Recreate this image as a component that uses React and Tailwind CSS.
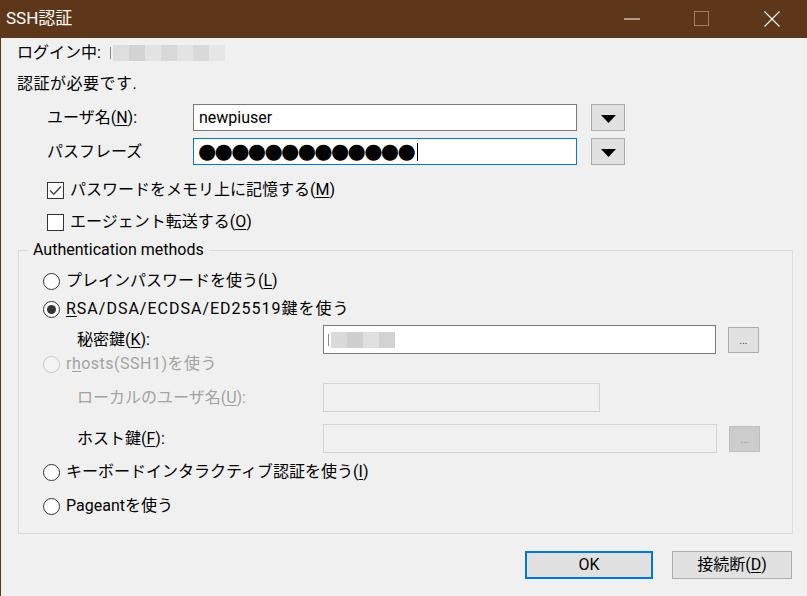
import React from "react";

// underlined access key letter
function Key({ children }) {
  return <span className="underline decoration-1 underline-offset-[2px]">{children}</span>;
}

function Blur({ blocks }) {
  return (
    <div className="flex h-[16px] items-center">
      <span className="mr-[2px] h-[12px] w-[1px] bg-[#8a8a8a]" />
      {blocks.map((c, i) => (
        <span key={i} className="h-[16px] w-[16px]" style={{ background: c }} />
      ))}
    </div>
  );
}

function DropBtn() {
  return (
    <div className="ml-[14px] flex h-[27px] w-[34px] items-center justify-center border border-[#adadad] bg-[#e1e1e1] pt-[3px]">
      <svg width="15" height="8" viewBox="0 0 15 8">
        <path d="M0 0 H15 L7.5 8 Z" fill="#000" />
      </svg>
    </div>
  );
}

function DotsBtn({ disabled }) {
  return (
    <div
      className={`ml-[12px] flex h-[26px] w-[31px] items-end justify-center border pb-[6px] text-[10px] leading-none ${
        disabled ? "border-[#bfbfbf] bg-[#cccccc] text-[#9a9a9a]" : "border-[#adadad] bg-[#e1e1e1] text-[#333]"
      }`}
    >
      ...
    </div>
  );
}

function Check({ checked, children, className = "" }) {
  return (
    <div className={`flex h-[22px] items-center ${className}`}>
      <span className="flex h-[17px] w-[17px] items-center justify-center border border-[#333] bg-white">
        {checked && (
          <svg width="13" height="11" viewBox="0 0 13 11">
            <path d="M1 5.5 L4.8 9.2 L12 1.6" fill="none" stroke="#444" strokeWidth="1.5" />
          </svg>
        )}
      </span>
      <span className="ml-[6px]">{children}</span>
    </div>
  );
}

function Radio({ checked, disabled, children, className = "" }) {
  return (
    <div className={`flex h-[20px] items-center ${className}`}>
      <span
        className={`flex h-[17px] w-[17px] items-center justify-center rounded-full border ${
          disabled ? "border-[#c6c6c6] bg-[#f4f4f4]" : "border-[#333] bg-white"
        }`}
      >
        {checked && <span className="h-[9px] w-[9px] rounded-full bg-[#333]" />}
      </span>
      <span className={`ml-[6px] ${disabled ? "text-[#a3a3a3]" : ""}`}>{children}</span>
    </div>
  );
}

export default function App() {
  return (
    <div className="flex h-[596px] w-[807px] flex-col overflow-hidden font-['Roboto','Noto_Sans_CJK_JP',sans-serif] text-[16px] text-black">
      {/* title bar */}
      <div className="flex h-[38px] shrink-0 items-center bg-[#5e361a] text-white">
        <span className="pl-[6px] text-[17px]">SSH認証</span>
        <div className="ml-auto flex h-full">
          <span className="flex w-[70px] items-center justify-center">
            <svg width="16" height="2" viewBox="0 0 16 2">
              <path d="M0 1 H16" stroke="#fff" strokeWidth="1" />
            </svg>
          </span>
          <span className="flex w-[70px] items-center justify-center">
            <svg width="16" height="16" viewBox="0 0 16 16">
              <rect x="0.5" y="0.5" width="14" height="14" fill="none" stroke="#9a7f6a" strokeWidth="1" />
            </svg>
          </span>
          <span className="flex w-[70px] items-center justify-center">
            <svg width="16" height="16" viewBox="0 0 16 16">
              <path d="M0.5 0.5 L15.5 15.5 M15.5 0.5 L0.5 15.5" stroke="#fff" strokeWidth="1.1" />
            </svg>
          </span>
        </div>
      </div>

      {/* body */}
      <div className="flex-1 border-l border-[#5e361a] bg-[#f0f0f0] pl-[16px] pt-[4px]">
        <div className="flex h-[22px] items-center">
          <span className="w-[93px]">ログイン中:</span>
          <Blur blocks={["#dedede", "#d3d3d3", "#e3e3e3", "#d9d9d9", "#e3e3e3", "#dadada", "#e6e6e6"]} />
        </div>
        <div className="mt-[9px] flex h-[22px] items-center tracking-[0.5px]">認証が必要です.</div>

        <div className="mt-[9px] flex h-[27px] items-center pl-[30px]">
          <span className="w-[146px]">
            ユーザ名(<Key>N</Key>):
          </span>
          <div className="flex h-[27px] w-[384px] items-center border border-[#7a7a7a] bg-white pl-[5px]">newpiuser</div>
          <DropBtn />
        </div>

        <div className="mt-[7px] flex h-[27px] items-center pl-[30px]">
          <span className="w-[146px]">パスフレーズ</span>
          <div className="flex h-[27px] w-[384px] items-center border border-[#0078d7] bg-white pl-[4px]">
            <span className="font-['DejaVu_Sans'] text-[21px] leading-none tracking-[-1.7px]">●●●●●●●●●●●●●</span>
            <span className="ml-[3px] h-[18px] w-px bg-black" />
          </div>
          <DropBtn />
        </div>

        <Check checked className="mt-[14px] ml-[30px]">
          パスワードをメモリ上に記憶する(<Key>M</Key>)
        </Check>
        <Check className="mt-[10px] ml-[30px]">
          エージェント転送する(<Key>O</Key>)
        </Check>

        {/* Authentication methods group */}
        <div className="relative ml-[1px] mt-[17px] w-[775px] border border-[#dcdcdc] pb-[17px] pl-[24px] pt-[20px]">
          <span className="absolute -top-[12px] left-[9px] h-[22px] bg-[#f0f0f0] px-[5px] leading-[22px]">
            Authentication methods
          </span>

          <Radio>
            プレインパスワードを使う(<Key>L</Key>)
          </Radio>
          <Radio checked className="mt-[8px]">
            <span className="tracking-[1px]">
              <Key>R</Key>SA/DSA/ECDSA/ED25519鍵を使う
            </span>
          </Radio>

          <div className="mt-[6px] flex h-[29px] items-center pl-[34px]">
            <span className="w-[246px]">
              秘密鍵(<Key>K</Key>):
            </span>
            <div className="flex h-[29px] w-[393px] items-center border border-[#7a7a7a] bg-white pl-[4px]">
              <Blur blocks={["#dadada", "#cfcfcf", "#e0e0e0", "#d2d2d2"]} />
            </div>
            <DotsBtn />
          </div>

          <Radio disabled>
            <span className="tracking-[0.5px]">
              r<Key>h</Key>osts(SSH1)を使う
            </span>
          </Radio>

          <div className="mt-[9px] flex h-[29px] items-center pl-[34px]">
            <span className="w-[246px] text-[#a3a3a3]">
              ローカルのユーザ名(<Key>U</Key>):
            </span>
            <div className="h-[29px] w-[277px] border border-[#d4d4d4] bg-[#f0f0f0]" />
          </div>

          <div className="mt-[12px] flex h-[29px] items-center pl-[34px]">
            <span className="w-[246px]">
              ホスト鍵(<Key>F</Key>):
            </span>
            <div className="h-[29px] w-[394px] border border-[#d4d4d4] bg-[#f0f0f0]" />
            <DotsBtn disabled />
          </div>

          <Radio className="mt-[9px]">
            キーボードインタラクティブ認証を使う(<Key>I</Key>)
          </Radio>
          <Radio className="mt-[14px]">Pageantを使う</Radio>
        </div>

        {/* buttons */}
        <div className="mt-[17px] flex justify-end gap-[19px] pr-[15px]">
          <button className="h-[28px] w-[128px] border-2 border-[#0078d7] bg-[#e1e1e1]">OK</button>
          <button className="h-[28px] w-[120px] border border-[#adadad] bg-[#e1e1e1]">
            接続断(<Key>D</Key>)
          </button>
        </div>
      </div>
    </div>
  );
}
